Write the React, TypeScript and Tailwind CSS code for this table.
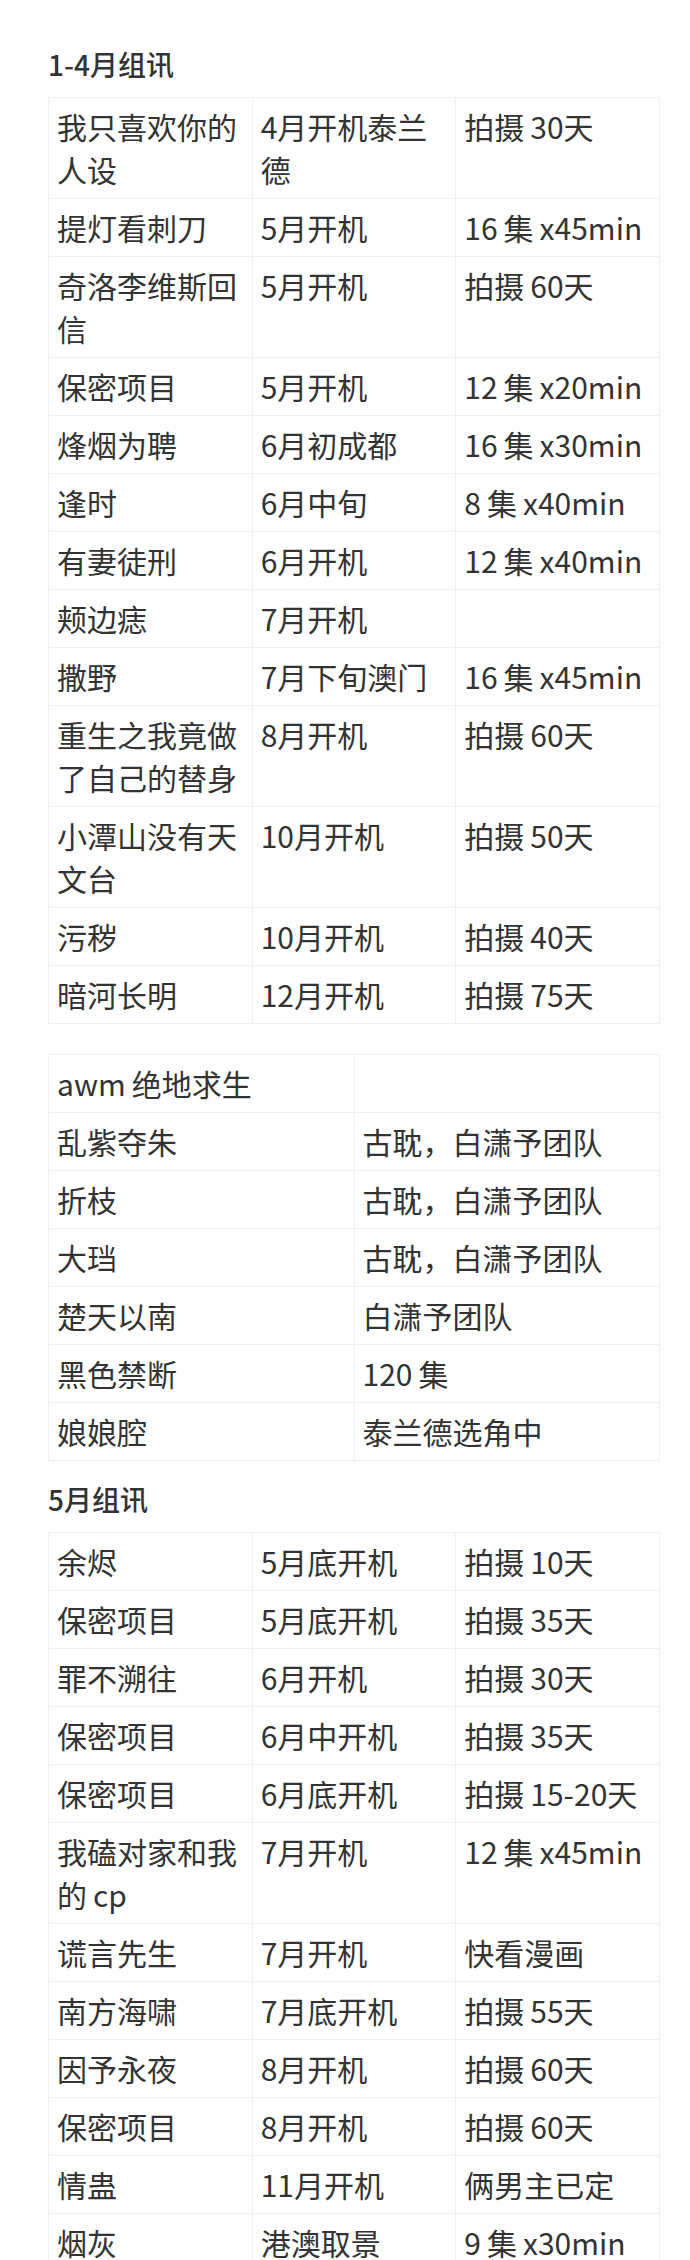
const T = "\u2009";

const part1: string[][] = [
  ["我只喜欢你的人设", "4月开机泰兰德", `拍摄${T}30天`],
  ["提灯看刺刀", "5月开机", `16${T}集${T}x45min`],
  ["奇洛李维斯回信", "5月开机", `拍摄${T}60天`],
  ["保密项目", "5月开机", `12${T}集${T}x20min`],
  ["烽烟为聘", "6月初成都", `16${T}集${T}x30min`],
  ["逢时", "6月中旬", `8${T}集${T}x40min`],
  ["有妻徒刑", "6月开机", `12${T}集${T}x40min`],
  ["颊边痣", "7月开机", ""],
  ["撒野", "7月下旬澳门", `16${T}集${T}x45min`],
  ["重生之我竟做了自己的替身", "8月开机", `拍摄${T}60天`],
  ["小潭山没有天文台", "10月开机", `拍摄${T}50天`],
  ["污秽", "10月开机", `拍摄${T}40天`],
  ["暗河长明", "12月开机", `拍摄${T}75天`],
];

const part2: string[][] = [
  [`awm${T}绝地求生`, ""],
  ["乱紫夺朱", "古耽，白潇予团队"],
  ["折枝", "古耽，白潇予团队"],
  ["大珰", "古耽，白潇予团队"],
  ["楚天以南", "白潇予团队"],
  ["黑色禁断", `120${T}集`],
  ["娘娘腔", "泰兰德选角中"],
];

const part3: string[][] = [
  ["余烬", "5月底开机", `拍摄${T}10天`],
  ["保密项目", "5月底开机", `拍摄${T}35天`],
  ["罪不溯往", "6月开机", `拍摄${T}30天`],
  ["保密项目", "6月中开机", `拍摄${T}35天`],
  ["保密项目", "6月底开机", `拍摄${T}15-20天`],
  [`我磕对家和我的${T}cp`, "7月开机", `12${T}集${T}x45min`],
  ["谎言先生", "7月开机", "快看漫画"],
  ["南方海啸", "7月底开机", `拍摄${T}55天`],
  ["因予永夜", "8月开机", `拍摄${T}60天`],
  ["保密项目", "8月开机", `拍摄${T}60天`],
  ["情蛊", "11月开机", "俩男主已定"],
  ["烟灰", "港澳取景", `9${T}集${T}x30min`],
];

function Table({ rows }: { rows: string[][] }) {
  return (
    <table className="w-[612px] table-fixed border-collapse">
      <tbody>
        {rows.map((r, i) => (
          <tr key={i}>
            {r.map((c, j) => (
              <td
                key={j}
                className="border border-[#f0f0f0] px-2 py-[7px] align-top text-[30px] leading-[43px] text-[#333333] break-all"
              >
                {c}
              </td>
            ))}
          </tr>
        ))}
      </tbody>
    </table>
  );
}

export default function App() {
  return (
    <div
      className="min-h-[2260px] bg-white pl-[48px] pr-[30px] pt-[44px]"
      style={{ fontFamily: '"Noto Sans CJK SC", "Noto Sans", sans-serif' }}
    >
      <h2 className="mb-[13px] text-[28px] font-medium leading-[40px] text-[#333333]">1-4月组讯</h2>
      <Table rows={part1} />
      <div className="mt-[30px]">
        <Table rows={part2} />
      </div>
      <h2 className="mb-[13px] mt-[18px] text-[28px] font-medium leading-[40px] text-[#333333]">5月组讯</h2>
      <Table rows={part3} />
    </div>
  );
}
